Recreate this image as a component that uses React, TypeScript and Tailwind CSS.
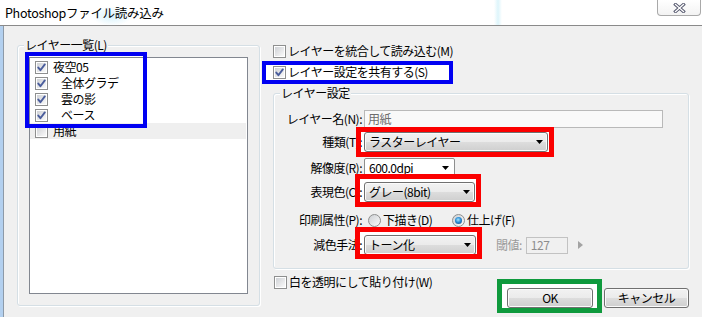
import React from "react";

function CheckBox({ checked = false }: { checked?: boolean }) {
  return (
    <span className="flex h-[13px] w-[13px] shrink-0 border border-[#8e8f8f] bg-white p-[1px]">
      <span className="flex flex-1 items-center justify-center bg-gradient-to-br from-[#cfd2d6] via-[#e4e5e7] to-[#fafafa]">
        {checked && (
          <svg width="9" height="9" viewBox="0 0 9 9">
            <path d="M1.3 4.6 L3.4 7.2 L7.8 1.4" fill="none" stroke="#4a5d9c" strokeWidth="1.9" strokeLinecap="round" strokeLinejoin="round" />
          </svg>
        )}
      </span>
    </span>
  );
}

function Radio({ checked = false }: { checked?: boolean }) {
  return (
    <span className="flex h-[13px] w-[13px] shrink-0 items-center justify-center rounded-full border border-[#8e8f8f] bg-gradient-to-br from-[#cdd0d4] to-[#fbfbfb]">
      {checked && (
        <span className="h-[7px] w-[7px] rounded-full bg-[radial-gradient(circle_at_45%_40%,#a6e6ff_0%,#2d8fd6_45%,#0d3f7a_100%)]" />
      )}
    </span>
  );
}

function Arrow() {
  return (
    <svg width="7" height="4" viewBox="0 0 7 4" className="shrink-0">
      <path d="M0 0H7L3.5 4Z" fill="#000" />
    </svg>
  );
}

function Combo({ text, className }: { text: string; className: string }) {
  return (
    <div
      className={
        "flex h-[20px] items-center justify-between rounded-[3px] border border-[#707070] bg-[linear-gradient(#f2f2f2,#ebebeb_50%,#dddddd_50%,#cfcfcf)] pl-[4px] pr-[4px] leading-[16px] shadow-[inset_0_0_0_1px_#fbfbfb] " +
        className
      }
    >
      <span>{text}</span>
      <Arrow />
    </div>
  );
}

function Group({ label, className, children }: { label: string; className: string; children?: React.ReactNode }) {
  return (
    <div className={"relative rounded-[3px] border border-[#d5dfe5] shadow-[inset_1px_1px_0_#ffffff,1px_1px_0_#ffffff] " + className}>
      <span className="absolute left-[6px] top-[-9px] bg-[#f0f0f0] px-[1px] leading-[16px]">{label}</span>
      {children}
    </div>
  );
}

function Btn({ text, className }: { text: string; className: string }) {
  return (
    <div
      className={
        "flex h-[20px] items-center justify-center rounded-[3px] border border-[#707070] bg-[linear-gradient(#f2f2f2,#ebebeb_50%,#dddddd_50%,#cfcfcf)] leading-[16px] shadow-[inset_0_0_0_1px_#fbfbfb] " +
        className
      }
    >
      {text}
    </div>
  );
}

function Label({ text }: { text: string }) {
  return <span className="w-[88px] shrink-0 text-right leading-[16px]">{text}</span>;
}

const layers = [
  { name: "夜空05", indent: false, checked: true },
  { name: "全体グラデ", indent: true, checked: true },
  { name: "雲の影", indent: true, checked: true },
  { name: "ベース", indent: true, checked: true },
  { name: "用紙", indent: false, checked: false },
];

export default function App() {
  return (
    <div className="relative h-[317px] w-[702px] overflow-hidden bg-[#f0f0f0] font-['Noto_Sans_CJK_JP','Noto_Sans',sans-serif] text-[12px] tracking-[-0.5px] text-black">
      {/* title bar */}
      <div className="relative flex h-[26px] items-start justify-between border-b border-[#8a8a8a] bg-white">
        <div className="pointer-events-none absolute left-[92px] top-[6px] h-[20px] w-[40px] bg-[radial-gradient(closest-side,#d6f1fb,transparent)]" />
        <div className="pointer-events-none absolute left-[494px] top-0 h-[25px] w-[8px] bg-[linear-gradient(90deg,transparent,#ddf5fb,transparent)]" />
        <span className="relative pl-[5px] pt-[4px] text-[12.5px] leading-[17px] tracking-[-0.3px]">Photoshopファイル読み込み</span>
        <div className="relative mr-[1px] flex h-[16px] w-[44px] items-center justify-center rounded-b-[4px] border border-t-0 border-[#a9a9a9] bg-[linear-gradient(#ffffff,#f3f3f3)]">
          <svg width="13" height="10" viewBox="0 0 13 10">
            <path d="M2.5 1.5 L10.5 8.5 M10.5 1.5 L2.5 8.5" stroke="#55586e" strokeWidth="3.2" strokeLinecap="square" />
            <path d="M2.5 1.5 L10.5 8.5 M10.5 1.5 L2.5 8.5" stroke="#ffffff" strokeWidth="1.3" strokeLinecap="square" />
          </svg>
        </div>
      </div>

      {/* white fills behind annotation frames */}
      <div className="absolute left-[25px] top-[52px] h-[76px] w-[122px] bg-white" />
      <div className="absolute left-[262px] top-[61px] h-[23px] w-[191px] bg-white" />
      <div className="absolute left-[356px] top-[127px] h-[30px] w-[198px] bg-white" />
      <div className="absolute left-[355px] top-[174px] h-[33px] w-[126px] bg-white" />
      <div className="absolute left-[355px] top-[227px] h-[32px] w-[127px] bg-white" />
      <div className="absolute left-[497px] top-[279px] h-[34px] w-[105px] bg-white" />

      {/* body */}
      <div className="relative z-10 flex h-[291px]">
        <div className="w-[3px] bg-[#b3d0ef]" />
        <div className="w-[1px] bg-[#8d9aa8]" />

        {/* left column */}
        <div className="pl-[13px] pt-[19px]">
          <Group label="レイヤー一覧(L)" className="h-[261px] w-[243px]">
            <div className="ml-[11px] mt-[11px] h-[237px] w-[219px] border border-[#828790] bg-white pt-[1px]">
              {layers.map((l) => (
                <div
                  key={l.name}
                  className={
                    l.checked
                      ? "flex h-[16px] items-center gap-[5px] pl-[5px] leading-[16px]"
                      : "mr-[1px] flex h-[16px] items-center gap-[5px] bg-[#efefef] pl-[5px] leading-[16px]"
                  }
                >
                  <CheckBox checked={l.checked} />
                  <span className={l.indent ? "ml-[8px]" : ""}>{l.name}</span>
                </div>
              ))}
            </div>
          </Group>
        </div>

        {/* right column */}
        <div className="ml-[13px] flex w-[416px] flex-col pt-[17px]">
          <div className="flex h-[16px] items-center gap-[2px]">
            <CheckBox />
            <span className="leading-[16px]">レイヤーを統合して読み込む(M)</span>
          </div>
          <div className="mt-[5px] flex h-[16px] items-center gap-[2px]">
            <CheckBox checked />
            <span className="leading-[16px]">レイヤー設定を共有する(S)</span>
          </div>

          <Group label="レイヤー設定" className="mt-[13px] h-[176px] w-[416px]">
            <div className="flex flex-col">
              <div className="mt-[16px] flex h-[18px] items-center gap-[2px]">
                <Label text="レイヤー名(N):" />
                <div className="flex h-[18px] w-[299px] items-center border border-[#b9b9b9] bg-[#f9f9f9] pl-[3px] leading-[16px] text-[#6d6d6d]">
                  用紙
                </div>
              </div>
              <div className="mt-[4px] flex h-[20px] items-center gap-[2px]">
                <Label text="種類(T):" />
                <Combo text="ラスターレイヤー" className="w-[184px]" />
              </div>
              <div className="mt-[6px] flex h-[20px] items-center gap-[2px]">
                <Label text="解像度(R):" />
                <div className="flex h-[20px] w-[91px] items-center justify-between rounded-[2px] border border-[#8e8f8f] bg-white pl-[4px] pr-[5px] leading-[16px]">
                  <span>600.0dpi</span>
                  <Arrow />
                </div>
              </div>
              <div className="mt-[4px] flex h-[20px] items-center gap-[2px]">
                <Label text="表現色(C):" />
                <Combo text="グレー(8bit)" className="w-[111px]" />
              </div>
              <div className="mt-[10px] flex h-[16px] items-center gap-[2px]">
                <Label text="印刷属性(P):" />
                <div className="flex items-center pl-[4px] leading-[16px]">
                  <Radio />
                  <span className="ml-[2px] w-[69px]">下描き(D)</span>
                  <Radio checked />
                  <span className="ml-[2px]">仕上げ(F)</span>
                </div>
              </div>
              <div className="mt-[7px] flex h-[20px] items-center gap-[2px]">
                <Label text="減色手法:" />
                <Combo text="トーン化" className="w-[112px]" />
                <span className="ml-[18px] leading-[16px] text-[#9a9a9a]">閾値:</span>
                <div className="ml-[2px] flex h-[17px] w-[42px] items-center border border-[#c2c2c2] pl-[4px] leading-[16px] text-[#8d8d8d]">
                  127
                </div>
                <svg width="5" height="8" viewBox="0 0 5 8" className="ml-[8px]">
                  <path d="M0 0L5 4L0 8Z" fill="#a3a3a3" />
                </svg>
              </div>
            </div>
          </Group>

          <div className="flex">
            <div className="ml-[1px] mt-[5px] flex h-[16px] items-center gap-[2px]">
              <CheckBox />
              <span className="leading-[16px]">白を透明にして貼り付け(W)</span>
            </div>
            <div className="ml-auto mt-[19px] flex gap-[11px]">
              <Btn text="OK" className="w-[86px]" />
              <Btn text="キャンセル" className="w-[85px]" />
            </div>
          </div>
        </div>
      </div>

      {/* annotation frames */}
      <div className="absolute left-[25px] top-[52px] z-20 h-[76px] w-[122px] border-[4px] border-[#0000f2]" />
      <div className="absolute left-[262px] top-[61px] z-20 h-[23px] w-[191px] border-[4px] border-[#0000f2]" />
      <div className="absolute left-[356px] top-[127px] z-20 h-[30px] w-[198px] border-[5px] border-[#fb0000]" />
      <div className="absolute left-[355px] top-[174px] z-20 h-[33px] w-[126px] border-[5px] border-[#fb0000]" />
      <div className="absolute left-[355px] top-[227px] z-20 h-[32px] w-[127px] border-[5px] border-[#fb0000]" />
      <div className="absolute left-[497px] top-[279px] z-20 h-[34px] w-[105px] border-[5px] border-[#0f9a3d]" />
    </div>
  );
}
